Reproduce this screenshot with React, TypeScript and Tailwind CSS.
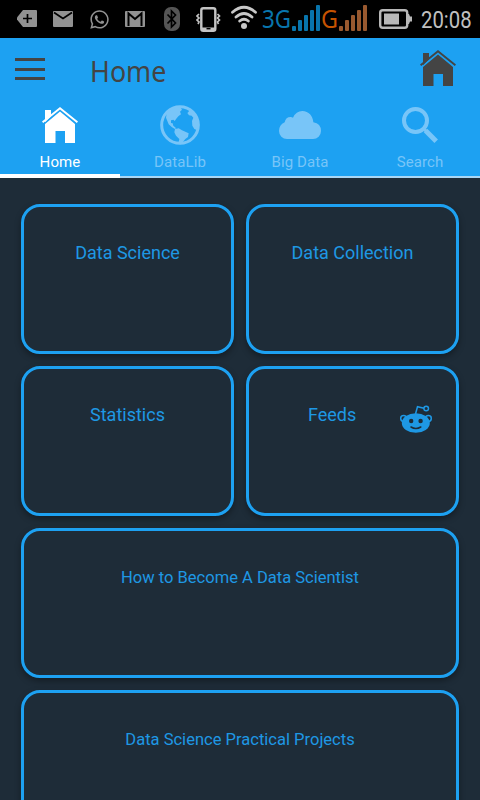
import type { ReactNode } from "react";
import { FaWhatsapp } from "react-icons/fa";

function HouseIcon({ className }: { className: string }) {
  return (
    <svg viewBox="0 0 36 36" width="36" height="36" className={className} fill="currentColor">
      <path d="M3 3h6v6.2l-6 6z" />
      <path d="M18 0 36 14.6 34.8 16 18 2.4 1.2 16 0 14.6z" />
      <path d="M18 4.6 33 17v19h-10V24h-9.500v12H3V17z" />
    </svg>
  );
}

function GlobeIcon() {
  return (
    <svg width="40" height="40" viewBox="0 0 120 120" fill="currentColor">
      <circle cx="60" cy="60" r="55" fill="none" stroke="currentColor" strokeWidth="9" />
      <path d="M20 24 32 14 46 8 60 6 66 14 60 20 63 28 55 34 50 40 44 48 40 44 33 46 33 54 38 55 40 62 47 68 46 73 36 67 26 58 22 48 18 38z" />
      <path d="M45 72 56 70 66 76 76 80 86 85 84 96 76 102 68 112 62 118 55 116 58 102 48 92 43 82z" />
      <path d="M88 13 86 20 82 24 87 31 95 32 100 38 96 48 97 62 103 72 112 76 118 60 113 40 100 20z" />
    </svg>
  );
}

function CloudIcon() {
  return (
    <svg width="42" height="28" viewBox="0 0 126 84" fill="currentColor">
      <path d="M24 84a24 24 0 0 1-24-24q0-18 17-26 3-16 18-16 4 0 7 2Q51 0 70 0c19 0 32 15 33 34q23 4 23 26a24 24 0 0 1-24 24z" />
    </svg>
  );
}

function SearchIcon() {
  return (
    <svg width="36" height="36" viewBox="0 0 36 36" fill="none" stroke="currentColor">
      <circle cx="13.500" cy="13.500" r="11.500" strokeWidth="4" />
      <path d="M21.500 21.500 24 24" strokeWidth="3" />
      <path d="m23.500 23.500 10.700 10.700" strokeWidth="5" />
    </svg>
  );
}

function RedditIcon() {
  return (
    <svg width="32" height="28" viewBox="0 0 32 28" fill="none" stroke="currentColor" strokeWidth="1.500">
      <path d="M15.500 9 17.500 1.700 24 3.200" />
      <circle cx="26.200" cy="3.500" r="2.300" />
      <circle cx="3.600" cy="13.500" r="2.900" />
      <circle cx="28.400" cy="13.500" r="2.900" />
      <ellipse cx="15.800" cy="18" rx="14" ry="9.800" fill="currentColor" stroke="none" />
      <circle cx="11.200" cy="16" r="2.200" fill="#1e2c38" stroke="none" />
      <circle cx="20.600" cy="16" r="2.200" fill="#1e2c38" stroke="none" />
      <path d="M11 22q4.900 3.200 9.800 0" stroke="#1e2c38" strokeLinecap="round" />
    </svg>
  );
}

function SignalBars({ className }: { className: string }) {
  return (
    <svg width="28" height="38" viewBox="0 0 28 38" className={className} fill="currentColor">
      <rect x="0" y="26" width="4" height="5" rx="1" />
      <rect x="6" y="20" width="4" height="11" rx="1" />
      <rect x="12" y="15" width="4" height="16" rx="1" />
      <rect x="18" y="10" width="4" height="21" rx="1" />
      <rect x="24" y="5" width="4" height="26" rx="1" />
    </svg>
  );
}

function NetworkLabel({ text, width, className }: { text: string; width: number; className: string }) {
  return (
    <svg width={width} height="38" className={`shrink-0 overflow-visible font-['Noto_Sans',sans-serif] ${className}`} fill="currentColor">
      <text x="0" y="27.500" fontSize="26" textLength={width} lengthAdjust="spacingAndGlyphs">{text}</text>
    </svg>
  );
}

function StatusBar() {
  return (
    <div className="flex h-[38px] items-center bg-black pl-[17px] text-[#929292] [&>svg]:shrink-0">
      <svg width="20" height="38" viewBox="0 0 20 38">
        <path d="M6 10h13q1 0 1 1v15q0 1-1 1H6L0 19.500v-2z" fill="currentColor" />
        <path d="M10.500 14v9M6 18.500h9" stroke="#000" strokeWidth="1.700" />
      </svg>
      <svg width="20" height="38" viewBox="0 0 20 38" className="ml-4">
        <rect y="11" width="20" height="16" rx="1" fill="currentColor" />
        <path d="m1 12.500 9 6 9-6" stroke="#000" strokeWidth="1.800" fill="none" />
      </svg>
      <FaWhatsapp size={21} className="ml-[16px]" />
      <svg width="20" height="38" viewBox="0 0 20 38" className="ml-[15px]">
        <rect y="11" width="20" height="16" rx="1" fill="currentColor" />
        <path d="M3.500 26V13.500L10 19l6.500-5.500V26" stroke="#000" strokeWidth="2" fill="none" />
      </svg>
      <svg width="16" height="38" viewBox="0 0 16 38" className="ml-[19px]">
        <rect y="7" width="16" height="24" rx="7" fill="#555" />
        <path d="m3.500 14.500 8 8.500-4 4V11l4 4-8 8.500" stroke="#000" strokeWidth="1.700" fill="none" />
      </svg>
      <svg width="25" height="38" viewBox="0 0 25 38" className="ml-4 text-[#c4c4c4]" fill="none" stroke="currentColor">
        <rect x="5.300" y="8.300" width="14" height="22.500" rx="2" strokeWidth="2.400" />
        <path d="M5 27.500h15v3H5z" fill="currentColor" stroke="none" />
        <path d="M10.500 28.700h4" stroke="#000" strokeWidth="1.400" />
        <path d="m3 14-2 2 2 2-2 2 2 2-1 2M21.500 14l2 2-2 2 2 2-2 2 1 2" strokeWidth="1.700" />
      </svg>
      <svg width="28" height="38" viewBox="0 0 28 38" className="ml-[9px] text-[#c8c8c8]" fill="none" stroke="currentColor" strokeWidth="2.800" strokeLinecap="round">
        <path d="M2.500 12.300q11.500-10 23 0M6 17q8-7 16 0M9.700 21q4.300-3.500 8.600 0" />
        <circle cx="14" cy="26" r="3" fill="currentColor" stroke="none" />
      </svg>
      <NetworkLabel text="3G" width={29} className="ml-[4px] text-[#0875ad]" />
      <SignalBars className="ml-[1px] text-[#0875ad]" />
      <NetworkLabel text="G" width={17} className="ml-[1px] text-[#c65300]" />
      <SignalBars className="ml-[1px] text-[#99592f]" />
      <svg width="33" height="38" viewBox="0 0 33 38" className="ml-[12px] text-[#b8b8b8]">
        <rect x="1.200" y="10.200" width="27" height="17.500" rx="2.500" fill="none" stroke="currentColor" strokeWidth="2.400" />
        <path d="M29 14h1l1 2.500h2v5h-2L30 24h-1z" fill="currentColor" />
        <rect x="5" y="13.500" width="15" height="11" fill="currentColor" />
      </svg>
      <span className="ml-[9px] mt-[1px] w-[59px] shrink-0 origin-left scale-x-[0.83] whitespace-nowrap text-[24.500px] leading-[38px] text-[#c0c0c0]">20:08</span>
    </div>
  );
}

function Tab({ label, active, children }: { label: string; active?: boolean; children: ReactNode }) {
  return (
    <div className={`flex w-[120px] flex-col items-center ${active ? "text-white" : "text-[#78c5f8]"}`}>
      <div className="flex h-[50px] items-center justify-center">{children}</div>
      <span className="mt-[3px] text-[15px] leading-[18px] tracking-[0.100px]">{label}</span>
      <div className={`mt-auto w-full ${active ? "h-1 bg-white" : "h-[2px] bg-[#a9d6f5]"}`} />
    </div>
  );
}

function Card({ title, wide, icon }: { title: string; wide?: boolean; icon?: ReactNode }) {
  return (
    <div className={`flex h-[150px] rounded-[19px] border-[3px] border-[#1da1f2] bg-[#1e2c38] text-[#1e98e4] shadow-[0_3px_6px_rgba(0,0,0,0.35)] ${icon ? "pl-[59px]" : "justify-center"} ${wide ? "col-span-2 pt-[35px] text-[16.550px]" : "pt-[34px] text-[18px]"}`}>
      <span className="leading-[24px]">{title}</span>
      {icon && <span className="ml-auto mr-[24px] mt-[2px]">{icon}</span>}
    </div>
  );
}

export default function App() {
  return (
    <div className="flex h-[800px] w-[480px] flex-col overflow-hidden bg-[#1e2c38] font-[Roboto,sans-serif]">
      <StatusBar />
      <header className="h-[140px] shrink-0 bg-[#1da1f2]">
        <div className="flex h-[62px] items-start pt-3 text-[#444]">
          <div className="ml-[15px] mt-2 flex w-[30px] flex-col gap-[6.500px]">
            <div className="h-[3px] bg-[#444]" />
            <div className="h-[3px] bg-[#444]" />
            <div className="h-[3px] bg-[#444]" />
          </div>
          <h1 className="ml-[45px] origin-left scale-x-[0.925] font-['Noto_Sans',sans-serif] text-[29px] leading-[42px]">Home</h1>
          <HouseIcon className="ml-auto mr-6" />
        </div>
        <nav className="flex h-[78px]">
          <Tab label="Home" active><HouseIcon className="" /></Tab>
          <Tab label="DataLib"><GlobeIcon /></Tab>
          <Tab label="Big Data"><CloudIcon /></Tab>
          <Tab label="Search"><SearchIcon /></Tab>
        </nav>
      </header>
      <main className="grid grid-cols-2 gap-3 px-[21px] pt-[26px]">
        <Card title="Data Science" />
        <Card title="Data Collection" />
        <Card title="Statistics" />
        <Card title="Feeds" icon={<RedditIcon />} />
        <Card title="How to Become A Data Scientist" wide />
        <Card title="Data Science Practical Projects" wide />
      </main>
    </div>
  );
}
